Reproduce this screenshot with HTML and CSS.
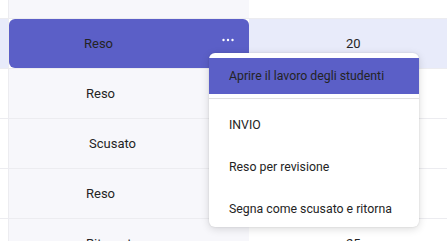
FILE: index.html
```html
<!DOCTYPE html>
<html lang="it">
<head>
    <meta charset="UTF-8">
    <meta name="viewport" content="width=device-width, initial-scale=1.0">
    <title>Voti</title>
    <link rel="stylesheet" href="styles.css">
</head>
<body>
    <div class="grid">
        <div class="row top">
            <div class="gutter"></div>
            <div class="status"></div>
            <div class="points"></div>
        </div>
        <div class="row selected">
            <div class="gutter"></div>
            <div class="status active">
                <span class="label">Reso</span>
                <svg class="more" width="12" height="4" viewBox="0 0 12 4">
                    <circle cx="1.5" cy="2" r="1.2" fill="#fff"/>
                    <circle cx="6" cy="2" r="1.2" fill="#fff"/>
                    <circle cx="10.5" cy="2" r="1.2" fill="#fff"/>
                </svg>
            </div>
            <div class="points">20</div>
        </div>
        <div class="row">
            <div class="gutter"></div>
            <div class="status"><span class="label shift">Reso</span></div>
            <div class="points"></div>
        </div>
        <div class="row">
            <div class="gutter"></div>
            <div class="status"><span class="label shift2">Scusato</span></div>
            <div class="points"></div>
        </div>
        <div class="row">
            <div class="gutter"></div>
            <div class="status"><span class="label shift">Reso</span></div>
            <div class="points"></div>
        </div>
        <div class="row last">
            <div class="gutter"></div>
            <div class="status"><span class="label shift">Ritornato</span></div>
            <div class="points">25</div>
        </div>

        <div class="menu">
            <div class="item hover">Aprire il lavoro degli studenti</div>
            <div class="divider"></div>
            <div class="item">INVIO</div>
            <div class="item">Reso per revisione</div>
            <div class="item">Segna come scusato e ritorna</div>
        </div>
    </div>
</body>
</html>
```

FILE: styles.css
```css
body {
    margin: 0;
    font-family: Roboto, "Liberation Sans", Arial, sans-serif;
    font-size: 13px;
    color: #242424;
    background: #fff;
    overflow: hidden;
    height: 241px;
}
.grid {
    position: relative;
}
.row {
    display: grid;
    grid-template-columns: 9px 240px 1fr;
    height: 50px;
    border-bottom: 1px solid #ececf0;
    box-sizing: border-box;
}
.row.top {
    height: 19px;
}
.gutter {
    background: #fff;
    border-right: 1px solid #ececf0;
}
.status {
    background: #f7f7fb;
    display: flex;
    align-items: center;
    position: relative;
}
.points {
    display: flex;
    align-items: center;
    padding-left: 97px;
}
.selected .gutter,
.selected .points {
    background: #e8ebfa;
}
.status.active {
    background: #5b5fc7;
    border-radius: 6px;
}
.label {
    padding-left: 75px;
}
.label.shift {
    padding-left: 77px;
}
.label.shift2 {
    padding-left: 80px;
}
.more {
    position: absolute;
    right: 15px;
    top: 19px;
}
.menu {
    position: absolute;
    left: 209px;
    top: 53px;
    width: 210px;
    background: #fff;
    border-radius: 6px;
    padding: 5px 0 0;
    box-shadow: 0 2px 8px rgba(0, 0, 0, 0.14), 0 0 2px rgba(0, 0, 0, 0.12);
    height: 174px;
    box-sizing: border-box;
    font-size: 12.3px;
}
.item {
    height: 42px;
    display: flex;
    align-items: center;
    padding-left: 20px;
}
.item.hover {
    background: #5b5fc7;
    height: 36px;
}
.divider {
    height: 1px;
    background: #e0e0e0;
    margin: 4px 0 5px;
}
```
